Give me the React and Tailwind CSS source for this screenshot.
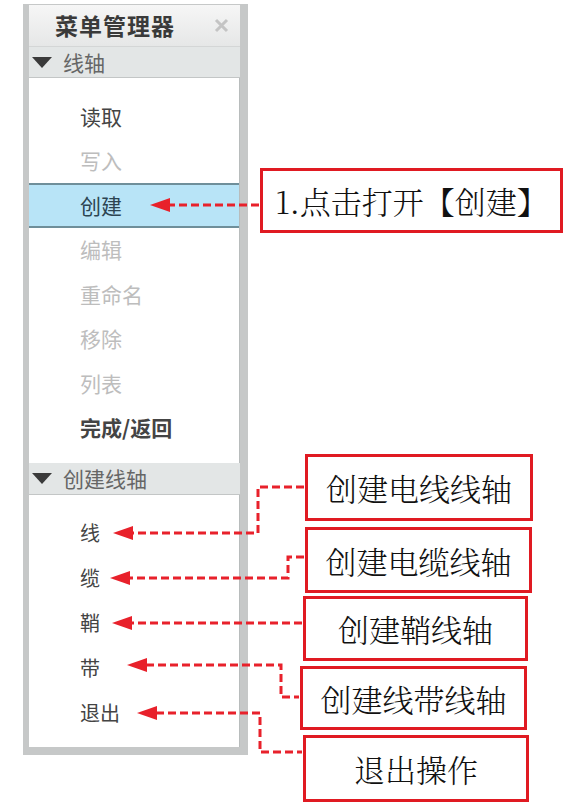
const sans = { fontFamily: '"Noto Sans CJK SC", "Noto Sans", sans-serif' };
const serif = { fontFamily: '"Noto Serif CJK SC", "Liberation Serif", "Noto Sans CJK SC", serif' };

const axisItems = [
  { label: "读取" },
  { label: "写入", off: true },
  { label: "创建", active: true },
  { label: "编辑", off: true },
  { label: "重命名", off: true },
  { label: "移除", off: true },
  { label: "列表", off: true },
  { label: "完成/返回", bold: true },
];

const createItems = ["线", "缆", "鞘", "带", "退出"];

function Caret() {
  return (
    <svg width="20" height="11" viewBox="0 0 20 11" className="shrink-0">
      <polygon points="0,0 20,0 10,11" fill="#3a3a3a" />
    </svg>
  );
}

function SectionHead({ title, h }) {
  return (
    <div className={`flex items-center gap-[11px] pl-[3px] bg-[#e3e6e6] border-b border-[#c3c6c6] ${h}`}>
      <Caret />
      <span className="text-[21px] text-[#666] leading-none">{title}</span>
    </div>
  );
}

function Callout({ className, children }) {
  return (
    <div
      className={`flex items-center justify-center border-[3px] border-[#e01a22] bg-white text-[31px] font-light text-[#111] leading-none ${className}`}
      style={serif}
    >
      {children}
    </div>
  );
}

function Arrow({ d, tip }) {
  const [x, y] = tip;
  return (
    <g>
      <path d={d} fill="none" stroke="#e8212b" strokeWidth="3" strokeDasharray="8 4" />
      <polygon points={`${x},${y} ${x + 20},${y - 7} ${x + 20},${y + 7}`} fill="#e8212b" />
    </g>
  );
}

export default function App() {
  return (
    <div className="relative w-[563px] h-[804px] bg-white flex overflow-hidden" style={sans}>
      {/* menu manager panel */}
      <div className="ml-[23px] mt-[4px] w-[225px] h-[751px] flex flex-col bg-white border-t border-l-[6px] border-r-[8px] border-b-[8px] border-[#c6c8c8]">
        <div className="h-[42px] flex items-center bg-gradient-to-b from-[#f6f6f6] to-[#e6e7e7] border-b border-[#d4d6d6]">
          <span className="ml-[26px] text-[23px] font-bold text-[#3a3a3a] tracking-[1px] leading-none">菜单管理器</span>
          <svg width="15" height="15" viewBox="0 0 15 15" className="ml-auto mr-[11px]">
            <path d="M2 2 L13 13 M13 2 L2 13" stroke="#c4c4c4" strokeWidth="3" />
          </svg>
        </div>
        <SectionHead title="线轴" h="h-[31px]" />
        <div className="h-[385px] pt-[16px] border-r border-[#b8bcbc]">
          {axisItems.map((it) => (
            <div
              key={it.label}
              className={`h-[44.5px] flex items-center pl-[51px] text-[21px] leading-none ${
                it.active ? "bg-[#b8e4f7] border-y-2 border-[#6f8f9a] text-[#2c4452]" : ""
              } ${it.off ? "text-[#bdbdbd]" : ""} ${!it.off && !it.active ? "text-[#444]" : ""} ${
                it.bold ? "font-bold text-[#333]" : ""
              }`}
            >
              {it.label}
            </div>
          ))}
        </div>
        <SectionHead title="创建线轴" h="h-[32px]" />
        <div className="flex-1 pt-[15px] border-r border-[#b8bcbc]">
          {createItems.map((t) => (
            <div key={t} className="h-[45px] flex items-center pl-[51px] text-[20px] text-[#444] leading-none">
              {t}
            </div>
          ))}
        </div>
      </div>

      {/* callouts */}
      <div className="flex flex-col">
        <Callout className="ml-[12px] mt-[168px] w-[303px] h-[65px]">1.点击打开【创建】</Callout>
        <Callout className="ml-[57px] mt-[221px] w-[228px] h-[67px]">创建电线线轴</Callout>
        <Callout className="ml-[57px] mt-[6px] w-[227px] h-[66px]">创建电缆线轴</Callout>
        <Callout className="ml-[55px] mt-[3px] w-[225px] h-[65px]">创建鞘线轴</Callout>
        <Callout className="ml-[52px] mt-[5px] w-[227px] h-[64px]">创建线带线轴</Callout>
        <Callout className="ml-[55px] mt-[5px] w-[226px] h-[67px]">退出操作</Callout>
      </div>

      {/* dashed leader arrows */}
      <svg className="absolute inset-0 pointer-events-none" width="563" height="804">
        <Arrow d="M259 205 H169" tip={[150, 205]} />
        <Arrow d="M304 487 H258 V533 H132" tip={[113, 533]} />
        <Arrow d="M304 557 H288 V578 H129" tip={[110, 578]} />
        <Arrow d="M302 623 H131" tip={[112, 623]} />
        <Arrow d="M146 665 H281 V697 H299" tip={[127, 665]} />
        <Arrow d="M156 713 H260 V752 H302" tip={[137, 713]} />
      </svg>
    </div>
  );
}
